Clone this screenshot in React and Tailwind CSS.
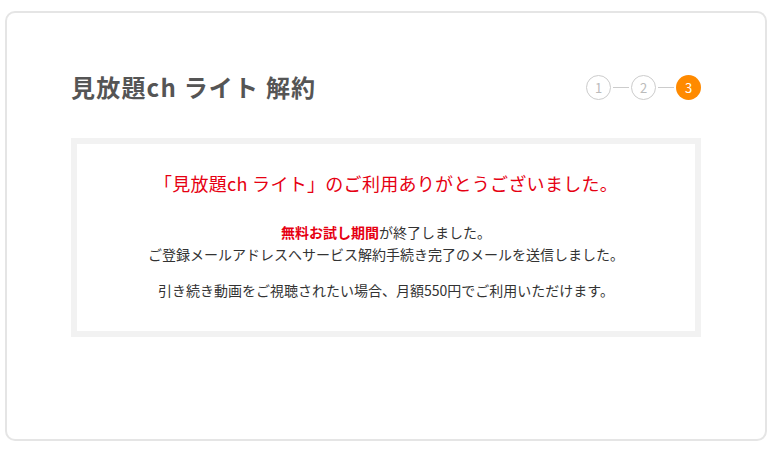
export default function App() {
  const font = { fontFamily: '"Noto Sans CJK JP", "Noto Sans", sans-serif' };
  return (
    <div className="w-[775px] h-[451px] bg-white pt-[11px] pl-[5px]" style={font}>
      <div className="w-[762px] h-[430px] border-2 border-[#e5e5e5] rounded-[10px] pt-[58px] pl-[64px] pr-[64px]">
        <div className="flex items-center justify-between h-[32px]">
          <h1 className="text-[24px] font-bold text-[#555555] leading-[32px] tracking-[1.2px]">見放題ch ライト 解約</h1>
          <div className="flex items-center">
            <div className="w-[25px] h-[25px] rounded-full border border-[#cccccc] text-[#bbbbbb] text-[13px] flex items-center justify-center leading-none">1</div>
            <div className="w-[16px] h-px bg-[#cccccc] mx-[2px]" />
            <div className="w-[25px] h-[25px] rounded-full border border-[#cccccc] text-[#bbbbbb] text-[13px] flex items-center justify-center leading-none">2</div>
            <div className="w-[16px] h-px bg-[#cccccc] mx-[2px]" />
            <div className="w-[25px] h-[25px] rounded-full bg-[#ff8a00] text-white text-[13px] flex items-center justify-center leading-none">3</div>
          </div>
        </div>
        <div className="mt-[35px] border-[6px] border-[#f2f2f2] bg-white pt-[25px] pb-[30px] text-center">
          <p className="text-[18px] leading-[28px] text-[#e60012] tracking-[0.3px]">「見放題ch ライト」のご利用ありがとうございました。</p>
          <p className="mt-[24px] text-[14px] leading-[22px] text-[#333333]">
            <span className="font-bold text-[#e60012]">無料お試し期間</span>が終了しました。
            <br />
            ご登録メールアドレスへサービス解約手続き完了のメールを送信しました。
          </p>
          <p className="mt-[14px] text-[14px] leading-[22px] text-[#333333]">引き続き動画をご視聴されたい場合、月額550円でご利用いただけます。</p>
        </div>
      </div>
    </div>
  );
}
